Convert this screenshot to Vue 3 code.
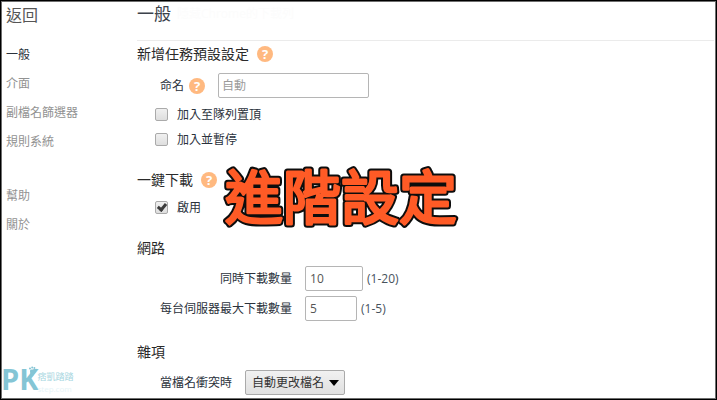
<script setup>
import { ref } from 'vue'

const mainLinks = ['一般', '介面', '副檔名篩選器', '規則系統']
const infoLinks = ['幫助', '關於']
const current = ref('一般')

const fileName = ref('')
const queueTop = ref(false)
const addPaused = ref(false)
const oneClick = ref(true)
const maxTasks = ref('10')
const maxPerServer = ref('5')
const conflict = ref('自動更改檔名')
</script>

<template>
  <div class="window">
    <nav class="sidebar">
      <a class="back" href="#">返回</a>
      <ul class="links">
        <li v-for="name in mainLinks" :key="name">
          <a href="#" :class="{ active: name === current }" @click.prevent="current = name">{{ name }}</a>
        </li>
      </ul>
      <ul class="links">
        <li v-for="name in infoLinks" :key="name">
          <a href="#" :class="{ active: name === current }" @click.prevent="current = name">{{ name }}</a>
        </li>
      </ul>
    </nav>

    <main class="content">
      <header class="title">
        <h1>一般</h1>
        <span class="ghost">隱藏Chrome的下載列</span>
      </header>

      <section>
        <h2>新增任務預設設定
          <button type="button" class="help">?</button>
        </h2>
        <div class="row tall">
          <label for="name">命名</label>
          <button type="button" class="help near">?</button>
          <input id="name" v-model="fileName" class="field name" type="text" placeholder="自動">
        </div>
        <label class="check"><input v-model="queueTop" type="checkbox">加入至隊列置頂</label>
        <label class="check"><input v-model="addPaused" type="checkbox">加入並暫停</label>
      </section>

      <section>
        <h2>一鍵下載
          <button type="button" class="help">?</button>
        </h2>
        <label class="check"><input v-model="oneClick" type="checkbox">啟用</label>
      </section>

      <section>
        <h2>網路</h2>
        <div class="grid">
          <label for="tasks">同時下載數量</label>
          <div class="value">
            <input id="tasks" v-model="maxTasks" class="field wide" type="text">
            <span>(1-20)</span>
          </div>
          <label for="server">每台伺服器最大下載數量</label>
          <div class="value">
            <input id="server" v-model="maxPerServer" class="field slim" type="text">
            <span>(1-5)</span>
          </div>
        </div>
      </section>

      <section>
        <h2>雜項</h2>
        <div class="row">
          <label for="conflict">當檔名衝突時</label>
          <span class="picker">
            <select id="conflict" v-model="conflict">
              <option>自動更改檔名</option>
            </select>
            <svg viewBox="0 0 10 6" width="10" height="6"><path d="M0 0h10L5 6z" fill="#000" /></svg>
          </span>
        </div>
      </section>
    </main>

    <svg class="caption" viewBox="0 0 260 92" width="260" height="92">
      <text class="edge" x="130" y="67" text-anchor="middle" aria-hidden="true">進階設定</text>
      <text class="face" x="130" y="67" text-anchor="middle">進階設定</text>
    </svg>

    <div class="watermark">
      <span class="pk">PK</span>
      <svg class="foot" viewBox="0 0 8 11" width="8" height="11" fill="#84c5d5">
        <path d="M1 5C1 3 6 3 6.500 5.500C7 7 5 7.500 4.500 9C4 11 1.500 11 1.500 9C1.500 7.500 1 6.500 1 5z" />
        <circle cx="1" cy="2.500" r="1" /><circle cx="3.200" cy="1.500" r="1" />
        <circle cx="5.400" cy="2" r="1" /><circle cx="7.200" cy="3.500" r=".8" />
      </svg>
      <span class="site"><b>痞凱踏踏</b><i>step.com</i></span>
    </div>
  </div>
</template>

<style>
body {
  background: #fff;
}
</style>

<style scoped>
.window {
  position: relative;
  box-sizing: border-box;
  display: flex;
  min-height: 100vh;
  border: 1px solid #000;
  box-shadow: inset 0 0 0 1px #6e6e6e;
  padding: 2px 2px 4px 5px;
  font: 12px/20px "Open Sans", "Noto Sans CJK TC", sans-serif;
  color: #2b323c;
}

.sidebar {
  flex: 0 0 131px;
}

.back {
  display: block;
  height: 24px;
  margin-bottom: 13px;
  font-size: 16px;
  line-height: 24px;
  color: #555;
  text-decoration: none;
}

.links {
  list-style: none;
  margin: 0 0 25px;
  padding: 0;
}

.links a {
  display: block;
  line-height: 29px;
  color: #929292;
  text-decoration: none;
}

.links a.active {
  color: #2b323c;
}

.content {
  flex: 1;
  min-width: 0;
}

.title {
  display: flex;
  align-items: center;
  gap: 6px;
  height: 21px;
  padding-bottom: 16px;
  border-bottom: 1px solid #ebebeb;
}

h1 {
  margin: 0;
  font-size: 17px;
  font-weight: 400;
  color: #3c424b;
}

.ghost {
  color: #fcfcfc;
}

section {
  margin-bottom: 15px;
}

section:last-child {
  margin-bottom: 0;
}

h2 {
  display: flex;
  align-items: center;
  gap: 8px;
  height: 26px;
  margin: 0 0 2px;
  font-size: 14px;
  font-weight: 400;
  color: #2a2a2a;
}

.help {
  width: 16px;
  height: 16px;
  padding: 0;
  border: 0;
  border-radius: 50%;
  background: #ffb980;
  color: #fff;
  font: 700 13px/16px "Open Sans", sans-serif;
  text-align: center;
}

.row {
  display: flex;
  align-items: center;
  padding: 3px 0 0 23px;
}

.row.tall {
  padding: 4px 0 4px 23px;
}

.near {
  margin: 0 13px 0 5px;
}

.field {
  box-sizing: border-box;
  height: 25px;
  padding: 0 4px;
  border: 1px solid #b5b5b5;
  border-radius: 2px;
  background: #fff;
  color: #555;
  font: inherit;
}

.field::placeholder {
  color: #9b9b9b;
  opacity: 1;
}

.name {
  width: 151px;
  padding: 0 3px;
}

.wide {
  width: 58px;
}

.slim {
  width: 52px;
}

.check {
  display: flex;
  align-items: center;
  gap: 9px;
  height: 25px;
  padding-left: 18px;
}

.check input {
  appearance: none;
  box-sizing: border-box;
  width: 13px;
  height: 13px;
  margin: 0;
  border: 1px solid #aaa;
  border-radius: 2px;
  background: linear-gradient(#f0f0f0, #dedede);
}

.check input:checked::before {
  content: "";
  display: block;
  width: 3px;
  height: 6px;
  margin: 0 0 0 3px;
  border: solid #3c3c3c;
  border-width: 0 3px 3px 0;
  transform: rotate(40deg);
}

.grid {
  display: grid;
  grid-template-columns: max-content 1fr;
  gap: 5px 13px;
  align-items: center;
  padding: 3px 0 3px 23px;
}

.grid label {
  text-align: right;
}

.value {
  display: flex;
  align-items: center;
  gap: 4px;
  color: #47525d;
}

.picker {
  display: grid;
  align-items: center;
  margin-left: 13px;
}

.picker select,
.picker svg {
  grid-area: 1 / 1;
}

.picker svg {
  justify-self: end;
  margin-right: 6px;
  pointer-events: none;
}

.picker select {
  appearance: none;
  box-sizing: border-box;
  width: 100px;
  height: 25px;
  padding: 0 6px;
  border: 1px solid #aaa;
  border-radius: 2px;
  background: linear-gradient(#f1f1f1, #e0e0e0);
  color: #333;
  font: inherit;
}

.caption {
  position: absolute;
  left: 210px;
  top: 151px;
  pointer-events: none;
}

.caption text {
  font: 400 58px "Noto Sans CJK TC", sans-serif;
  stroke-linejoin: round;
}

.edge {
  fill: #0d0d0d;
  stroke: #0d0d0d;
  stroke-width: 7px;
}

.face {
  fill: #ff5b26;
  stroke: #ff5b26;
  stroke-width: 3px;
}

.watermark {
  position: absolute;
  left: 0;
  bottom: 5px;
  display: flex;
  align-items: flex-end;
  color: #84c5d5;
}

.pk {
  font: 700 29px/30px "Open Sans", sans-serif;
}

.foot {
  align-self: flex-start;
  margin: 2px 0 0 -9px;
}

.site {
  display: grid;
  font-size: 9px;
  line-height: 12px;
}

.site b {
  font-weight: 400;
  color: #a5d5e0;
}

.site i {
  font-size: 8px;
  line-height: 11px;
  font-style: normal;
  color: #e6f4f7;
}
</style>
